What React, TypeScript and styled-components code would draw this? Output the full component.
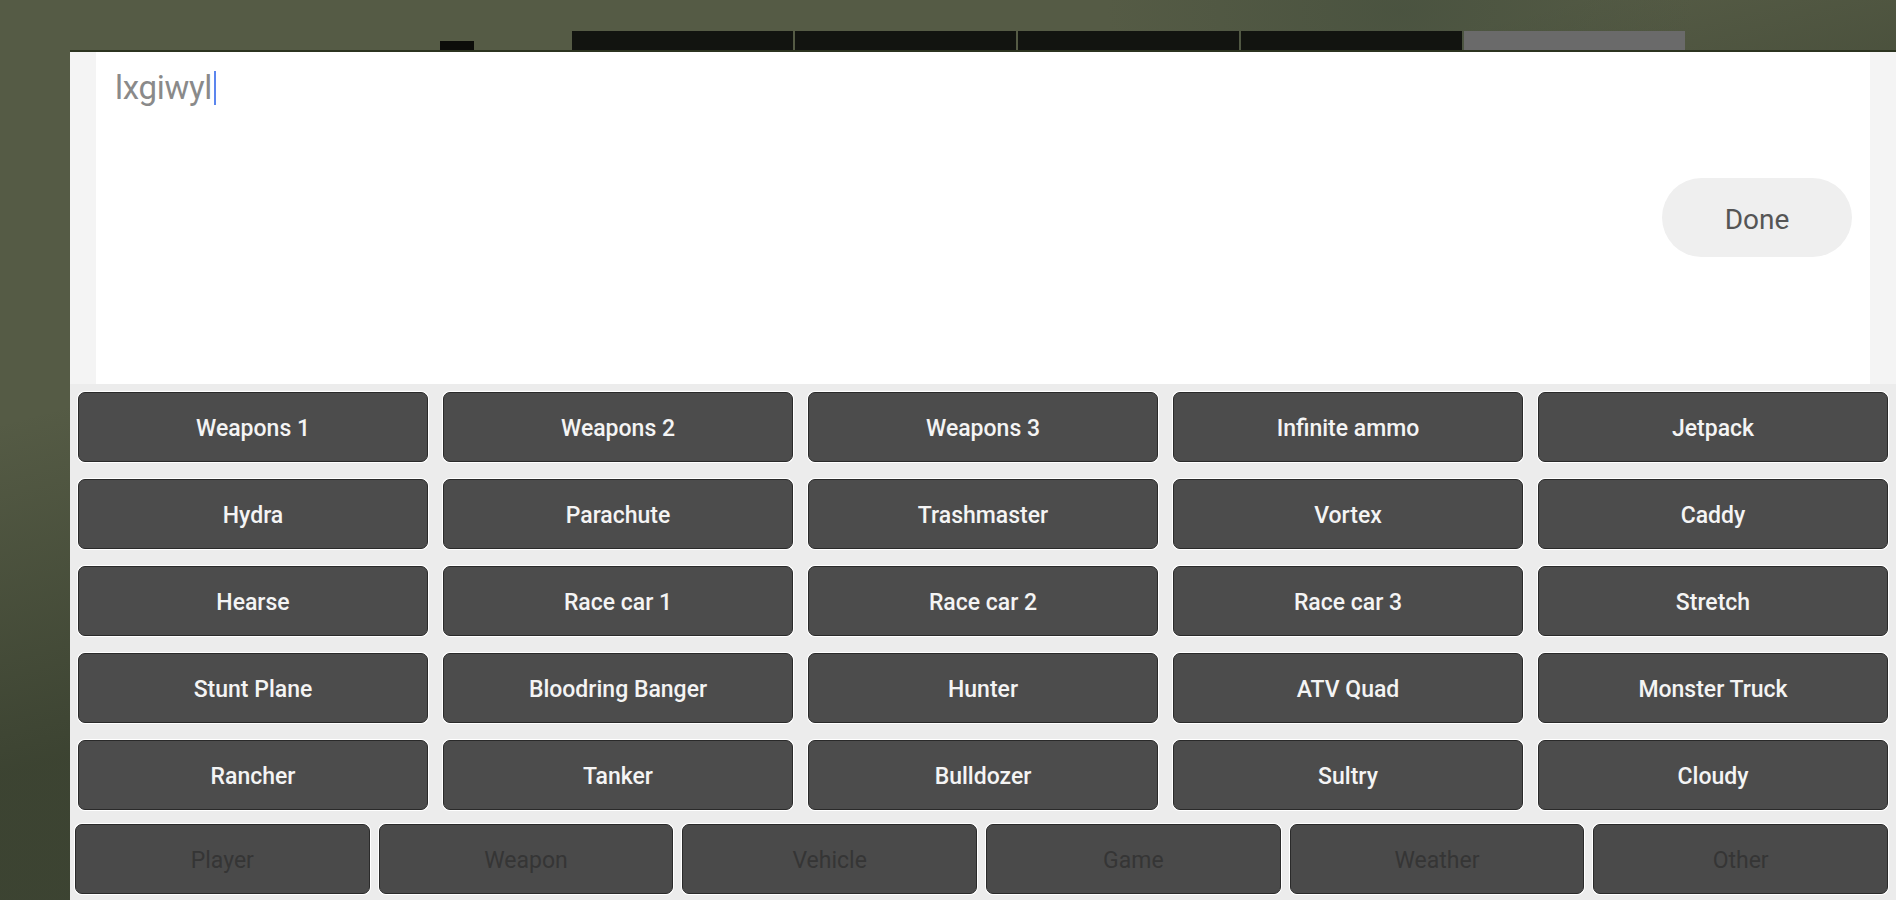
import styled, { createGlobalStyle } from "styled-components";

const GlobalStyle = createGlobalStyle`
  html, body {
    margin: 0;
    padding: 0;
    width: 1896px;
    height: 900px;
    overflow: hidden;
    font-family: Roboto, "Noto Sans", sans-serif;
  }
`;

const Screen = styled.div`
  width: 1896px;
  height: 900px;
  position: relative;
  background:
    radial-gradient(ellipse 420px 260px at 1400px 10px, rgba(70, 80, 62, 0.7), transparent 70%),
    linear-gradient(165deg, transparent 0 30%, rgba(40, 48, 34, 0.55) 55%),
    #555b45;
  display: flex;
  flex-direction: column;
`;

const TopBar = styled.div`
  height: 50px;
  display: flex;
  align-items: flex-end;
  padding-left: 440px;
  box-sizing: border-box;
`;

const SmallMark = styled.div`
  width: 34px;
  height: 9px;
  background: #0c0d0a;
  margin-right: 98px;
`;

const BgTab = styled.div<{ $active?: boolean }>`
  width: 221px;
  height: 19px;
  margin-right: 2px;
  background: ${(p) => (p.$active ? "#6a6a6a" : "#121410")};
`;

const Panel = styled.div`
  margin-left: 70px;
  flex: 1;
  display: flex;
  flex-direction: column;
  background: #ececec;
  border-top: 2px solid #2c3420;
`;

const InputArea = styled.div`
  height: 332px;
  flex-shrink: 0;
  display: flex;
  background: #f4f4f4;
  padding: 0 0 0 2px;
`;

const InputBody = styled.div`
  flex: 1;
  margin: 0 26px 0 24px;
  background: #ffffff;
  display: flex;
  flex-direction: column;
  padding: 16px 18px 0 19px;
`;

const TypedText = styled.div`
  font-family: Roboto, "Noto Sans", sans-serif;
  font-size: 33px;
  line-height: 40px;
  color: #8a8a8a;
  letter-spacing: -0.3px;
  display: flex;
  align-items: center;
`;

const Caret = styled.span`
  display: inline-block;
  width: 2px;
  height: 34px;
  background: #5b86ee;
  margin-left: 2px;
`;

const DoneRow = styled.div`
  display: flex;
  justify-content: flex-end;
  margin-top: 70px;
`;

const DoneButton = styled.button`
  width: 190px;
  height: 79px;
  border: none;
  border-radius: 40px;
  background: #efefef;
  color: #555555;
  font-family: Roboto, "Noto Sans", sans-serif;
  font-size: 28px;
  padding: 4px 0 0;
`;

const Grid = styled.div`
  display: grid;
  grid-template-columns: repeat(5, 1fr);
  grid-auto-rows: 70px;
  column-gap: 15px;
  row-gap: 17px;
  padding: 8px 8px 0 8px;
`;

const CheatButton = styled.button`
  background: #4c4c4c;
  border: 1.5px solid #2a2a2a;
  border-radius: 7px;
  box-shadow: 0 0 0 1px #ffffff;
  color: #f4f4f4;
  font-family: Roboto, "Noto Sans", sans-serif;
  font-weight: 500;
  font-size: 23px;
  padding: 3px 0 0;
`;

const TabRow = styled.div`
  display: grid;
  grid-template-columns: repeat(6, 1fr);
  column-gap: 9px;
  height: 70px;
  margin-top: 14px;
  padding: 0 8px 4px 5px;
`;

const CategoryTab = styled.button`
  background: #4a4a4a;
  border: 1.5px solid #2a2a2a;
  border-radius: 7px;
  box-shadow: 0 0 0 1px #ffffff;
  color: #353535;
  font-family: Roboto, "Noto Sans", sans-serif;
  font-size: 23px;
  padding: 3px 0 0;
`;

const cheats = [
  "Weapons 1", "Weapons 2", "Weapons 3", "Infinite ammo", "Jetpack",
  "Hydra", "Parachute", "Trashmaster", "Vortex", "Caddy",
  "Hearse", "Race car 1", "Race car 2", "Race car 3", "Stretch",
  "Stunt Plane", "Bloodring Banger", "Hunter", "ATV Quad", "Monster Truck",
  "Rancher", "Tanker", "Bulldozer", "Sultry", "Cloudy",
];

const categories = ["Player", "Weapon", "Vehicle", "Game", "Weather", "Other"];

export default function App() {
  return (
    <Screen>
      <GlobalStyle />
      <TopBar>
        <SmallMark />
        <BgTab />
        <BgTab />
        <BgTab />
        <BgTab />
        <BgTab $active />
      </TopBar>
      <Panel>
        <InputArea>
          <InputBody>
            <TypedText>
              lxgiwyl
              <Caret />
            </TypedText>
            <DoneRow>
              <DoneButton>Done</DoneButton>
            </DoneRow>
          </InputBody>
        </InputArea>
        <Grid>
          {cheats.map((c) => (
            <CheatButton key={c}>{c}</CheatButton>
          ))}
        </Grid>
        <TabRow>
          {categories.map((c) => (
            <CategoryTab key={c}>{c}</CategoryTab>
          ))}
        </TabRow>
      </Panel>
    </Screen>
  );
}
